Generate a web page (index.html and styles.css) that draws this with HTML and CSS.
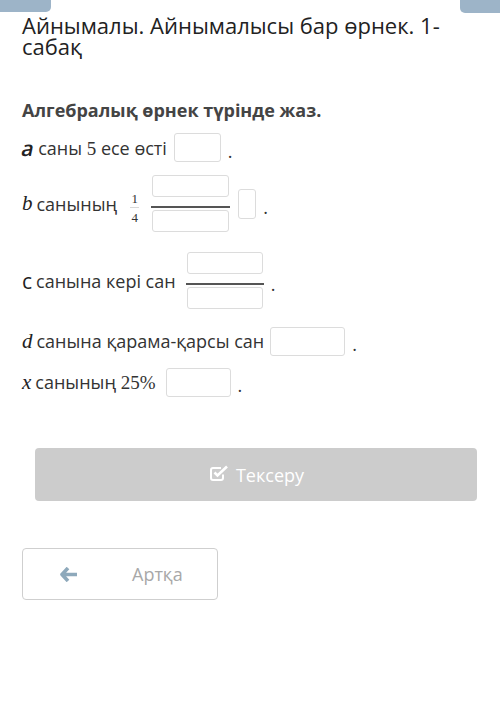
FILE: index.html
```html
<!DOCTYPE html>
<html>
<head>
<meta charset="utf-8">
<link rel="stylesheet" href="styles.css">
</head>
<body>
<div class="tab tab-left"></div>
<div class="tab tab-right"></div>
<main class="page">
  <h1 class="title">Айнымалы. Айнымалысы бар өрнек. 1-сабақ</h1>
  <p class="task">Алгебралық өрнек түрінде жаз.</p>

  <div class="row row-a">
    <span class="var sans slant">a</span><span class="txt">саны <span class="num">5</span> есе өсті</span>
    <span class="box box-a"></span><span class="dot">.</span>
  </div>

  <div class="row row-b">
    <span class="var mi">b</span><span class="txt">санының</span>
    <span class="sfrac"><span>1</span><span class="sline"></span><span>4</span></span>
    <span class="frac frac-b"><span class="box fbox"></span><span class="fline"></span><span class="box fbox fbox-bot"></span></span>
    <span class="box box-small"></span><span class="dot">.</span>
  </div>

  <div class="row row-c">
    <span class="var sans">c</span><span class="txt">санына кері сан</span>
    <span class="frac frac-c"><span class="box fbox"></span><span class="fline"></span><span class="box fbox fbox-bot"></span></span>
    <span class="dot">.</span>
  </div>

  <div class="row row-d">
    <span class="var mi">d</span><span class="txt">санына қарама-қарсы сан</span>
    <span class="box box-d"></span><span class="dot">.</span>
  </div>

  <div class="row row-x">
    <span class="var mi">x</span><span class="txt">санының <span class="num">25%</span></span>
    <span class="box box-x"></span><span class="dot">.</span>
  </div>

  <div class="check-wrap">
    <button class="check">
      <svg class="check-icon" width="19" height="17" viewBox="0 0 19 17">
        <path d="M13 9.5v3.5a2 2 0 0 1-2 2H3a2 2 0 0 1-2-2V5a2 2 0 0 1 2-2h8" fill="none" stroke="#fff" stroke-width="2"/>
        <path d="M4.5 7.5l3 3L17 1.5" fill="none" stroke="#fff" stroke-width="2.6"/>
      </svg>
      <span>Тексеру</span>
    </button>
  </div>

  <button class="back">
    <svg class="back-icon" width="18" height="15" viewBox="0 0 18 15">
      <path d="M8 1L2 7.5 8 14M2.5 7.5H17" fill="none" stroke="#8ea9bb" stroke-width="3.6" stroke-linejoin="round"/>
    </svg>
    <span class="back-text">Артқа</span>
  </button>
</main>
</body>
</html>
```

FILE: styles.css
```css
html, body {
  margin: 0;
  padding: 0;
  background: #fff;
}
body {
  width: 500px;
  height: 717px;
  overflow: hidden;
  position: relative;
  font-family: "Open Sans", "Noto Sans", sans-serif;
  color: #333;
}
.tab {
  position: absolute;
  top: 0;
  height: 12px;
  background: #9db4c8;
}
.tab-left {
  left: 0;
  width: 51px;
  border-bottom-right-radius: 5px;
}
.tab-right {
  right: 0;
  width: 40px;
  height: 13px;
  border-bottom-left-radius: 5px;
}
.page {
  padding: 15px 23px 0 22px;
}
.title {
  margin: 0;
  font-weight: 400;
  font-size: 22px;
  line-height: 21px;
  color: #222;
  width: 440px;
}
.task {
  margin: 41px 0 0;
  font-weight: 700;
  font-size: 18px;
  line-height: 24px;
  color: #444;
}
.row {
  display: flex;
  align-items: center;
  font-size: 18px;
  color: #333;
}
.var {
  margin-right: 4px;
}
.sans {
  font-family: "Open Sans", sans-serif;
  font-size: 21px;
  color: #222;
}
.slant {
  display: inline-block;
  transform: skewX(-12deg);
  font-weight: 600;
}
.mi {
  font-family: "Liberation Serif", "DejaVu Serif", serif;
  font-style: italic;
  font-size: 21px;
  color: #222;
}
.num {
  font-family: "Liberation Serif", "DejaVu Serif", serif;
  font-size: 19px;
}
.box {
  display: block;
  box-sizing: border-box;
  border: 1px solid #dcdcdc;
  border-radius: 3px;
  background: #fff;
}
.dot {
  margin-left: 7px;
  padding-top: 6px;
}
.row-a {
  margin-top: 11px;
  height: 29px;
}
.box-a {
  width: 47px;
  height: 29px;
  margin-left: 7px;
}
.row-b {
  margin-top: 13px;
}
.sfrac {
  display: flex;
  flex-direction: column;
  align-items: center;
  font-family: "Liberation Serif", serif;
  font-size: 13px;
  line-height: 11px;
  color: #333;
  margin-left: 13px;
  padding-top: 8px;
}
.sline {
  width: 9px;
  height: 1px;
  background: #d8d8d8;
  margin: 3px 0 4px;
}
.frac {
  display: flex;
  flex-direction: column;
  align-items: center;
}
.fbox {
  height: 22px;
}
.fline {
  height: 2px;
  background: #555;
  margin: 9px 0 2px;
}
.fbox-bot {
  height: 22px;
}
.frac-b {
  margin-left: 12px;
  width: 79px;
}
.frac-b .fbox {
  width: 77px;
}
.frac-b .fline {
  width: 79px;
}
.box-small {
  width: 18px;
  height: 30px;
  margin-left: 8px;
}
.row-c {
  margin-top: 20px;
}
.frac-c {
  margin-left: 10px;
  width: 78px;
}
.frac-c .fbox {
  width: 76px;
}
.frac-c .fline {
  width: 78px;
}
.row-d {
  margin-top: 17px;
}
.box-d {
  width: 75px;
  height: 29px;
  margin-left: 6px;
}
.row-x {
  margin-top: 11px;
}
.box-x {
  width: 65px;
  height: 29px;
  margin-left: 10px;
}
.check-wrap {
  padding: 0 0 0 13px;
  margin-top: 51px;
}
.check {
  display: flex;
  align-items: center;
  justify-content: center;
  gap: 7px;
  width: 442px;
  height: 53px;
  border: none;
  border-radius: 4px;
  background: #cccccc;
  color: #fff;
  font-family: "Open Sans", sans-serif;
  font-size: 18px;
  padding: 0 0 0 2px;
}
.check-icon {
  margin-top: -2px;
}
.back {
  display: flex;
  align-items: center;
  margin-top: 47px;
  width: 196px;
  height: 52px;
  box-sizing: border-box;
  border: 1px solid #cfcfcf;
  border-radius: 4px;
  background: #fff;
  padding: 0 0 0 37px;
  font-family: "Open Sans", sans-serif;
  font-size: 18px;
  color: #a8a8a8;
}
.back-text {
  margin-left: 54px;
}
```
